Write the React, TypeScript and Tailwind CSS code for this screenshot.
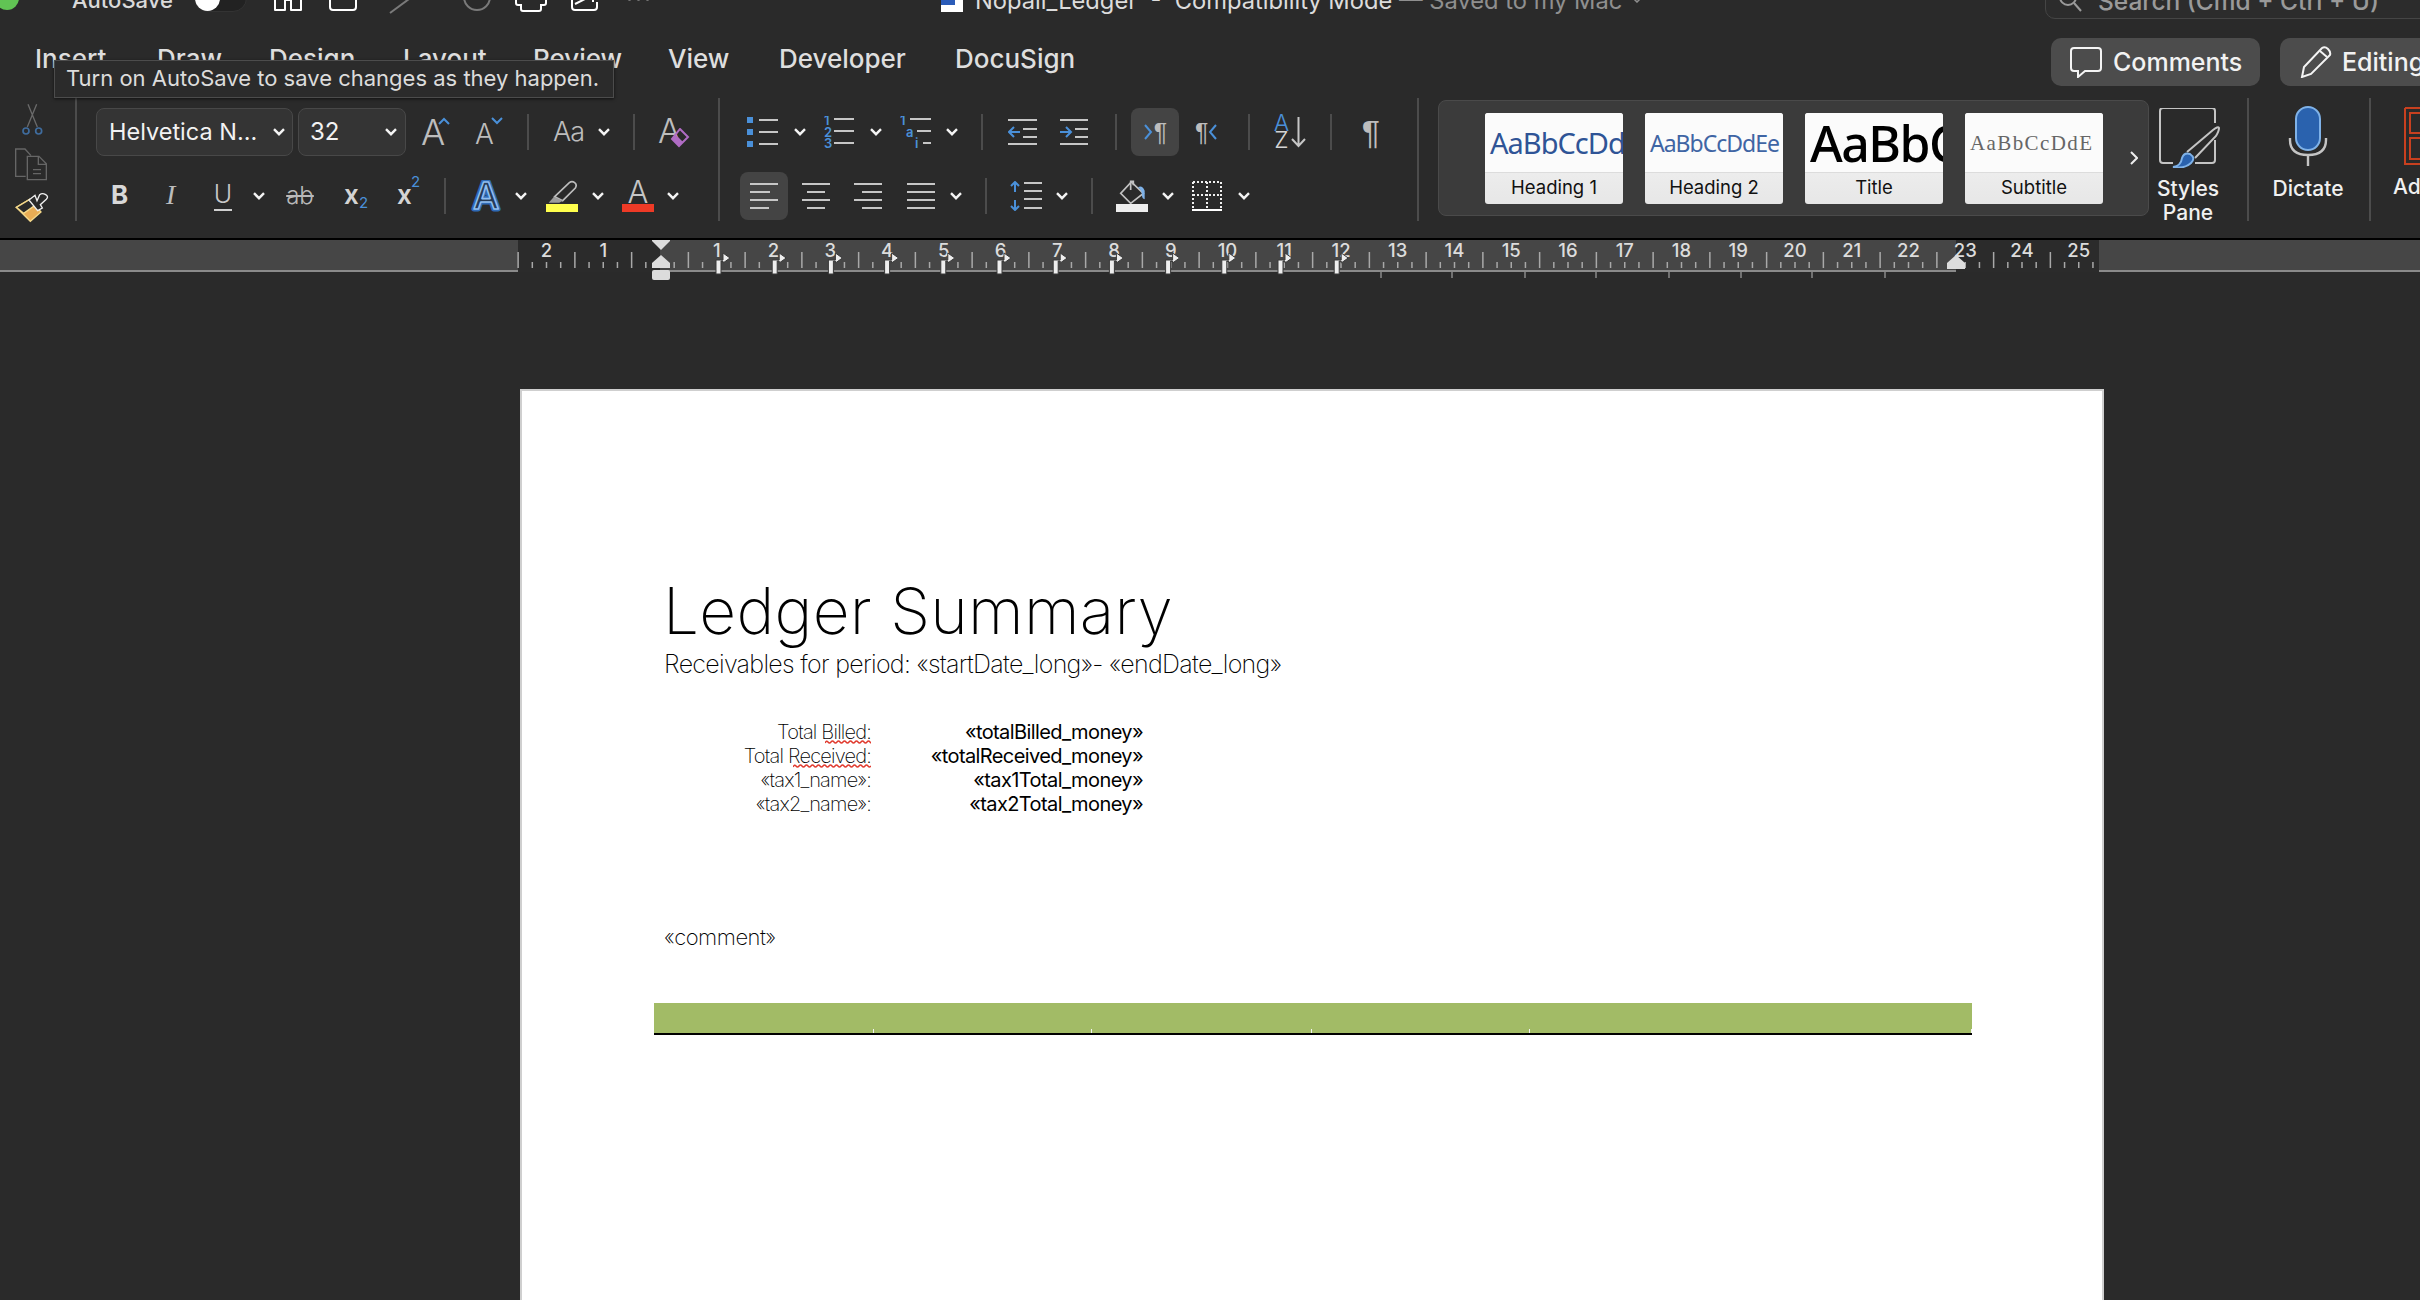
import React from 'react';

const Chev = ({ className = '' }: { className?: string }) => (
  <svg width="12" height="8" viewBox="0 0 12 8" className={'shrink-0 ' + className}>
    <path d="M1 1.2 6 6.2 11 1.2" fill="none" stroke="#f4f4f4" strokeWidth="2.4" />
  </svg>
);

const Sep = ({ className = '' }: { className?: string }) => (
  <div className={'w-[2px] h-[36px] shrink-0 bg-[#4c4c4c] ' + className} />
);

const GroupSep = () => <div className="w-[2px] h-[123px] shrink-0 bg-[#4c4c4c]" />;

function Lines({ w, rows }: { w: number; rows: [number, number][] }) {
  return (
    <svg width={w} height="28" viewBox={'0 0 ' + w + ' 28'} className="shrink-0">
      {rows.map(([a, b], i) => (
        <line key={i} x1={a} x2={b} y1={2 + i * 8} y2={2 + i * 8} stroke="#c6c6c6" strokeWidth="2" />
      ))}
    </svg>
  );
}

function TopBar() {
  return (
    <div className="h-[40px] -mt-[20px] flex items-center shrink-0">
      <div className="w-[24px] h-[24px] -ml-[5px] -mt-[4px] rounded-full bg-[#61c454] shrink-0" />
      <div className="ml-[53px] w-[122px] mt-[1px] text-[22px] text-[#d9d9d9] font-medium shrink-0">AutoSave</div>
      <div className="relative w-[53px] h-[28px] -mt-[4px] rounded-full bg-[#222] border border-[#333] shrink-0">
        <div className="absolute left-0 top-0 w-[25px] h-[26px] rounded-full bg-white" />
      </div>
      <svg width="28" height="24" viewBox="0 -12 28 24" className="ml-[27px] shrink-0">
        <path d="M1-12V10H11V0H17V10H27V-12" fill="none" stroke="#fff" strokeWidth="2" strokeLinejoin="round" />
      </svg>
      <svg width="28" height="24" viewBox="0 -12 28 24" className="ml-[27px] shrink-0">
        <path d="M1-12V7Q1 10 4 10H24Q27 10 27 7V-12M6-2H22" fill="none" stroke="#fff" strokeWidth="2" />
      </svg>
      <svg width="52" height="28" viewBox="0 -14 52 28" className="ml-[32px] shrink-0">
        <path d="M1 13 20-1" fill="none" stroke="#7a7a7a" strokeWidth="2" />
        <path d="M40-3 45 0 50-3Z" fill="#7a7a7a" />
      </svg>
      <svg width="28" height="24" viewBox="0 -12 28 24" className="ml-[22px] shrink-0">
        <circle cx="14" cy="-3" r="13" fill="none" stroke="#7a7a7a" strokeWidth="2" />
      </svg>
      <svg width="32" height="24" viewBox="0 -12 32 24" className="ml-[24px] shrink-0">
        <path d="M1-12V3Q1 5 3 5H6V9Q6 11 8 11H24Q26 11 26 9V5H29Q31 5 31 3V-12" fill="none" stroke="#fff" strokeWidth="2" />
      </svg>
      <svg width="27" height="24" viewBox="0 -12 27 24" className="ml-[24px] shrink-0">
        <path d="M1-6V7Q1 10 4 10H23Q26 10 26 7V2M4 4 16-2M10-6 22-6 22 2" fill="none" stroke="#fff" strokeWidth="2" />
      </svg>
      <div className="ml-[30px] flex gap-[6px] mt-[-1px] shrink-0">
        <div className="w-[3px] h-[3px] rounded-full bg-[#777]" />
        <div className="w-[3px] h-[3px] rounded-full bg-[#777]" />
        <div className="w-[3px] h-[3px] rounded-full bg-[#777]" />
      </div>
      <svg width="22" height="24" viewBox="0 -12 22 24" className="ml-[292px] shrink-0">
        <path d="M0-12H22V12H0Z" fill="#fff" />
        <rect x="0" y="-12" width="14" height="17" fill="#2b5cb8" />
      </svg>
      <div className="ml-[12px] w-[657px] mt-[2px] shrink-0 text-[23.7px] whitespace-nowrap text-[#dcdcdc]">
        Nopali_Ledger &nbsp;-&nbsp; Compatibility Mode <span className="text-[#8f8f8f]">— Saved to my Mac</span>
      </div>
      <svg width="10" height="6" viewBox="0 0 10 6" className="shrink-0">
        <path d="M1 1 5 5 9 1" fill="none" stroke="#8f8f8f" strokeWidth="1.5" />
      </svg>
      <div className="ml-[403px] flex-1 h-[38px] min-w-0 rounded-[10px] border border-[#454545] bg-[#2c2c2c] flex items-center pl-[12px] -mr-[20px]">
        <svg width="24" height="24" viewBox="0 0 24 24" className="shrink-0">
          <circle cx="10" cy="9" r="8" fill="none" stroke="#9a9a9a" strokeWidth="2" />
          <path d="M16 15 23 23" stroke="#9a9a9a" strokeWidth="2" />
        </svg>
        <span className="ml-[16px] mt-[3px] text-[24.5px] text-[#9a9a9a] font-medium whitespace-nowrap">Search (Cmd + Ctrl + U)</span>
      </div>
    </div>
  );
}

function Tabs() {
  const tab = 'shrink-0 text-[26px] leading-[30px] font-medium text-[#dedede] pt-[24px]';
  return (
    <div className="h-[78px] flex items-start pl-[35px] shrink-0 overflow-hidden">
      <div className={tab + ' w-[122px]'}>Insert</div>
      <div className={tab + ' w-[112px]'}>Draw</div>
      <div className={tab + ' w-[134px]'}>Design</div>
      <div className={tab + ' w-[130px]'}>Layout</div>
      <div className={tab + ' w-[135px]'}>Review</div>
      <div className={tab + ' w-[111px]'}>View</div>
      <div className={tab + ' w-[176px]'}>Developer</div>
      <div className={tab + ' w-[1096px]'}>DocuSign</div>
      <button className="mt-[18px] w-[209px] h-[48px] rounded-[10px] bg-[#4c4c4c] flex items-center pl-[18px] shrink-0">
        <svg width="34" height="32" viewBox="0 0 34 32" className="shrink-0">
          <path d="M5 2H29Q32 2 32 5V22Q32 25 29 25H16L9 31V25H5Q2 25 2 22V5Q2 2 5 2Z" fill="none" stroke="#f4f4f4" strokeWidth="2" />
        </svg>
        <span className="ml-[10px] mt-[1px] text-[25px] font-medium text-[#f2f2f2]">Comments</span>
      </button>
      <button className="ml-[20px] mt-[18px] w-[200px] h-[48px] rounded-[10px] bg-[#4c4c4c] flex items-center pl-[20px] shrink-0">
        <svg width="32" height="32" viewBox="0 0 32 32" className="shrink-0">
          <path d="M2 31 4 21 22 2Q25 0 28 3T30 9L11 28Z" fill="none" stroke="#f4f4f4" strokeWidth="2" />
          <path d="M20 5 27 11" stroke="#f4f4f4" strokeWidth="2" />
        </svg>
        <span className="ml-[10px] mt-[1px] text-[25px] font-medium text-[#f2f2f2]">Editing</span>
      </button>
    </div>
  );
}

function Clipboard() {
  return (
    <div className="w-[75px] flex flex-col pl-[13px] pt-[7px] shrink-0">
      <svg width="32" height="33" viewBox="0 0 96 99" className="ml-[3px] -mt-[2px] shrink-0">
        <path d="M36 4 64 72M62 4 34 72" fill="none" stroke="#6a6a6a" strokeWidth="4" />
        <circle cx="30" cy="84" r="9" fill="none" stroke="#3f6c9e" strokeWidth="5" />
        <circle cx="68" cy="84" r="9" fill="none" stroke="#3f6c9e" strokeWidth="5" />
      </svg>
      <svg width="34" height="33" viewBox="16 143 100 99" className="ml-[1px] mt-[12px] shrink-0">
        <path d="M50 228H20V146H48L66 166" fill="none" stroke="#666" strokeWidth="4" />
        <path d="M55 168H90L112 190V238H55ZM88 168V192H112M72 208H96M72 220H96" fill="none" stroke="#666" strokeWidth="4" />
      </svg>
      <svg width="34" height="31" viewBox="16 274 102 93" className="ml-[2px] mt-[11px] shrink-0">
        <path d="M20 320 60 296 94 334 62 362Z" fill="#e9ad55" stroke="#f5d98a" strokeWidth="4" />
        <path d="M20 320 60 296 76 314 42 338Z" fill="#2a2a2a" stroke="#f5d98a" strokeWidth="4" />
        <path d="M58 298 76 284 82 300 90 282Q98 276 108 282T110 296L92 312 98 322 84 330Z" fill="#2a2a2a" stroke="#f0f0f0" strokeWidth="4" />
      </svg>
    </div>
  );
}

function FontGroup() {
  const sup = 'absolute';
  return (
    <div className="w-[641px] flex flex-col gap-[16px] pt-[10px] shrink-0">
      <div className="h-[48px] flex items-center">
        <div className="ml-[19px] w-[197px] h-[48px] rounded-[8px] bg-[#343434] border border-[#484848] flex items-center pl-[12px] shrink-0">
          <span className="w-[164px] text-[23.5px] text-[#f2f2f2] whitespace-nowrap">Helvetica N...</span>
          <Chev />
        </div>
        <div className="ml-[5px] w-[108px] h-[48px] rounded-[8px] bg-[#343434] border border-[#484848] flex items-center pl-[11px] shrink-0">
          <span className="w-[75px] text-[24px] text-[#f2f2f2]">32</span>
          <Chev />
        </div>
        <div className="relative ml-[15px] w-[28px] h-[30px] shrink-0">
          <span className="text-[36px] leading-[30px] font-light text-[#bdbdbd]">A</span>
          <svg width="12" height="8" viewBox="0 0 12 8" className={sup + ' -right-[1px] top-0'}><path d="M1 7 6 2 11 7" fill="none" stroke="#4a90d9" strokeWidth="2" /></svg>
        </div>
        <div className="relative ml-[26px] w-[28px] h-[30px] shrink-0 flex items-end">
          <span className="text-[28px] leading-[26px] font-light text-[#bdbdbd]">A</span>
          <svg width="12" height="8" viewBox="0 0 12 8" className={sup + ' right-0 top-0'}><path d="M1 1 6 6 11 1" fill="none" stroke="#4a90d9" strokeWidth="2" /></svg>
        </div>
        <Sep className="ml-[24px]" />
        <span className="ml-[24px] w-[31px] text-[27px] font-light text-[#bdbdbd] shrink-0 whitespace-nowrap tracking-[-1px]">Aa</span>
        <Chev className="ml-[14px]" />
        <Sep className="ml-[23px]" />
        <div className="relative ml-[23px] w-[31px] h-[30px] shrink-0">
          <span className="text-[34px] leading-[28px] font-light text-[#bdbdbd]">A</span>
          <svg width="20" height="20" viewBox="0 0 20 20" className={sup + ' -right-[1px] -bottom-[1px]'}>
            <path d="M10 1 18 9 9 18 2 11Z" fill="none" stroke="#b06cc4" strokeWidth="2" />
            <path d="M6 7 13 14 9 18 2 11Z" fill="#b06cc4" />
          </svg>
        </div>
      </div>
      <div className="h-[48px] flex items-center">
        <span className="ml-[34px] w-[17px] -mt-[3px] text-[26px] font-bold text-[#d8d8d8] shrink-0">B</span>
        <span className="ml-[38px] w-[13px] -mt-[3px] text-[28px] italic text-[#bcbcbc] shrink-0 [font-family:'Liberation_Serif',serif]">I</span>
        <span className="ml-[35px] w-[18px] -mt-[1px] text-[25px] leading-[29px] border-b-2 border-[#d0d0d0] font-light text-[#c8c8c8] shrink-0 flex justify-center">U</span>
        <Chev className="ml-[21px]" />
        <span className="relative ml-[20px] w-[30px] text-[24px] text-[#b9b9b9] font-light shrink-0 text-center line-through">ab</span>
        <span className="relative ml-[29px] w-[23px] -mt-[3px] text-[26px] font-semibold text-[#d4d4d4] shrink-0">
          x<span className="absolute left-[15px] top-[17px] text-[15px] text-[#4a90d9] font-normal">2</span>
        </span>
        <span className="relative ml-[30px] w-[22px] -mt-[3px] text-[26px] font-semibold text-[#d4d4d4] shrink-0">
          x<span className="absolute left-[14px] -top-[4px] text-[15px] text-[#4a90d9] font-normal">2</span>
        </span>
        <Sep className="ml-[25px]" />
        <svg width="32" height="32" viewBox="0 0 32 32" className="ml-[24px] -mt-[1px] shrink-0">
          <text x="16" y="29" textAnchor="middle" fill="none" stroke="#2f6ab5" strokeWidth="5" strokeLinejoin="round" className="text-[37px] font-medium">A</text>
          <text x="16" y="29" textAnchor="middle" fill="#263a55" stroke="#8fbdf0" strokeWidth="1.6" strokeLinejoin="round" className="text-[37px] font-medium">A</text>
        </svg>
        <Chev className="ml-[13px]" />
        <div className="ml-[19px] w-[32px] flex flex-col shrink-0">
          <svg width="32" height="24" viewBox="0 0 96 72">
            <path d="M26 50 70 8Q78 2 86 8T88 24L50 62Z" fill="none" stroke="#bdbdbd" strokeWidth="5" />
            <path d="M8 68 24 50 50 62 40 68Z" fill="#9c9c9c" />
          </svg>
          <div className="h-[8px] bg-[#ffff4d]" />
        </div>
        <Chev className="ml-[14px]" />
        <div className="ml-[18px] w-[32px] flex flex-col items-center shrink-0">
          <span className="text-[31px] leading-[24px] font-light text-[#c6c6c6]">A</span>
          <div className="w-full h-[8px] bg-[#ee3a26]" />
        </div>
        <Chev className="ml-[13px]" />
      </div>
    </div>
  );
}

function ParagraphGroup() {
  const numCls = 'fill-[#4a90d9] text-[13px] font-semibold';
  const pil = "[font-family:'Liberation_Sans',sans-serif] text-[#bdbdbd]";
  return (
    <div className="w-[697px] flex flex-col gap-[16px] pt-[10px] shrink-0">
      <div className="h-[48px] flex items-center">
        <svg width="31" height="30" viewBox="0 0 31 30" className="ml-[27px] shrink-0">
          <path d="M0 0H6V6H0ZM0 12H6V18H0ZM0 24H6V30H0Z" fill="#4a90d9" />
          <path d="M12 3H31M12 15H31M12 27H31" stroke="#c6c6c6" strokeWidth="2" />
        </svg>
        <Chev className="ml-[16px]" />
        <svg width="30" height="32" viewBox="0 0 30 32" className="ml-[18px] shrink-0">
          <text x="0" y="9" className={numCls}>1</text>
          <text x="0" y="21" className={numCls}>2</text>
          <text x="0" y="32" className={numCls}>3</text>
          <path d="M10 3H30M10 15H30M10 27H30" stroke="#c6c6c6" strokeWidth="2" />
        </svg>
        <Chev className="ml-[16px]" />
        <svg width="31" height="32" viewBox="0 0 31 32" className="ml-[18px] shrink-0">
          <text x="0" y="9" className={numCls}>1</text>
          <text x="6" y="21" className={numCls}>a</text>
          <text x="15" y="32" className={numCls}>i</text>
          <path d="M10 3H31M17 15H31M23 27H31" stroke="#c6c6c6" strokeWidth="2" />
        </svg>
        <Chev className="ml-[15px]" />
        <Sep className="ml-[23px]" />
        <svg width="29" height="30" viewBox="0 0 29 30" className="ml-[25px] shrink-0">
          <path d="M0 3H29M15 12H29M15 20H29M0 27H29" stroke="#c6c6c6" strokeWidth="2" />
          <path d="M1 15H12M6 10 1 15 6 20" fill="none" stroke="#4a90d9" strokeWidth="2" />
        </svg>
        <svg width="28" height="30" viewBox="0 0 28 30" className="ml-[23px] shrink-0">
          <path d="M0 3H28M15 12H28M15 20H28M0 27H28" stroke="#c6c6c6" strokeWidth="2" />
          <path d="M0 15H11M6 10 11 15 6 20" fill="none" stroke="#4a90d9" strokeWidth="2" />
        </svg>
        <Sep className="ml-[27px]" />
        <div className="ml-[14px] w-[48px] h-[48px] rounded-[8px] bg-[#444] flex items-center justify-center shrink-0">
          <svg width="10" height="18" viewBox="0 0 10 18" className="shrink-0"><path d="M2 2 8 9 2 16" fill="none" stroke="#4a90d9" strokeWidth="2" /></svg>
          <span className={'ml-[1px] text-[25px] leading-[24px] ' + pil}>¶</span>
        </div>
        <div className="ml-[16px] w-[24px] flex items-center shrink-0">
          <span className={'text-[25px] leading-[24px] ' + pil}>¶</span>
          <svg width="10" height="18" viewBox="0 0 10 18" className="shrink-0"><path d="M8 2 2 9 8 16" fill="none" stroke="#4a90d9" strokeWidth="2" /></svg>
        </div>
        <Sep className="ml-[29px]" />
        <div className="ml-[22px] w-[34px] flex items-center shrink-0">
          <div className="w-[19px] flex flex-col items-center text-[23px] leading-[17px] font-light">
            <span className="text-[#4a90d9]">A</span>
            <span className="text-[#d4d4d4]">Z</span>
          </div>
          <svg width="15" height="32" viewBox="0 0 15 32" className="shrink-0"><path d="M7.5 1V30M1 23 7.5 30 14 23" fill="none" stroke="#c6c6c6" strokeWidth="2" /></svg>
        </div>
        <Sep className="ml-[24px]" />
        <span className={'ml-[27px] w-[24px] text-[34px] leading-[32px] shrink-0 text-center ' + pil}>¶</span>
      </div>
      <div className="h-[48px] flex items-center">
        <div className="ml-[20px] w-[48px] h-[48px] rounded-[8px] bg-[#444] flex items-center justify-center shrink-0">
          <Lines w={28} rows={[[0, 28], [0, 20], [0, 28], [0, 19]]} />
        </div>
        <div className="ml-[14px] shrink-0"><Lines w={28} rows={[[0, 28], [5, 23], [0, 28], [5, 23]]} /></div>
        <div className="ml-[24px] shrink-0"><Lines w={28} rows={[[0, 28], [8, 28], [0, 28], [8, 28]]} /></div>
        <div className="ml-[25px] shrink-0"><Lines w={28} rows={[[0, 28], [0, 28], [0, 28], [0, 28]]} /></div>
        <Chev className="ml-[15px]" />
        <Sep className="ml-[23px]" />
        <svg width="32" height="30" viewBox="0 0 32 30" className="ml-[23px] shrink-0">
          <path d="M14 2H32M14 10H32M14 18H32M14 27H32" stroke="#c6c6c6" strokeWidth="2" />
          <path d="M5 1V11M1 5 5 1 9 5M5 19V29M1 25 5 29 9 25" fill="none" stroke="#4a90d9" strokeWidth="2" />
        </svg>
        <Chev className="ml-[14px]" />
        <Sep className="ml-[23px]" />
        <div className="ml-[23px] w-[32px] flex flex-col shrink-0">
          <svg width="32" height="24" viewBox="0 0 96 72">
            <path d="M14 40 46 6 82 40 44 70Z" fill="none" stroke="#c2c2c2" strokeWidth="5" />
            <path d="M44 30V4H52V16" fill="none" stroke="#c2c2c2" strokeWidth="5" />
            <path d="M66 22Q78 14 86 32V58Q78 56 78 46 78 32 66 22Z" fill="#7fb2e8" />
          </svg>
          <div className="h-[8px] bg-[#eeeeee]" />
        </div>
        <Chev className="ml-[14px]" />
        <svg width="30" height="30" viewBox="0 0 30 30" className="ml-[18px] shrink-0">
          <path d="M1 1H29V27M1 1V27M15 1V27M1 14H29" fill="none" stroke="#f0f0f0" strokeWidth="2" strokeDasharray="2 2" />
          <path d="M0 29H30" stroke="#fff" strokeWidth="2" />
        </svg>
        <Chev className="ml-[16px]" />
      </div>
    </div>
  );
}

function StyleCard({ label, children }: { label: string; children: React.ReactNode }) {
  return (
    <div className="w-[138px] h-[91px] rounded-[3px] overflow-hidden bg-gradient-to-b from-[#f7f7f7] to-[#e7e7e7] flex flex-col shrink-0">
      <div className="h-[60px] bg-[#fbfbfb] border-b border-[#dcdcdc] overflow-hidden px-[5px] flex items-center shrink-0">
        {children}
      </div>
      <div className="flex-1 flex items-center justify-center pb-[2px] text-[18.5px] text-[#111]">{label}</div>
    </div>
  );
}

function StylesGallery() {
  return (
    <div className="ml-[19px] mt-[2px] w-[711px] h-[116px] rounded-[8px] bg-[#3b3b3b] border border-[#4a4a4a] flex items-start pl-[46px] pt-[12px] shrink-0">
      <div className="flex gap-[22px] shrink-0">
        <StyleCard label="Heading 1">
          <span className="text-[29px] leading-[36px] text-[#2f5496] whitespace-nowrap tracking-[-1px] [font-family:'Noto_Sans',sans-serif]">AaBbCcDdEe</span>
        </StyleCard>
        <StyleCard label="Heading 2">
          <span className="text-[23px] leading-[30px] text-[#3f65a4] whitespace-nowrap tracking-[-1px] [font-family:'Noto_Sans',sans-serif]">AaBbCcDdEe</span>
        </StyleCard>
        <StyleCard label="Title">
          <span className="text-[50px] leading-[54px] font-medium text-black whitespace-nowrap tracking-[-1.5px] [font-family:'Noto_Sans',sans-serif]">AaBbCc</span>
        </StyleCard>
        <StyleCard label="Subtitle">
          <span className="text-[21px] leading-[28px] text-[#666] whitespace-nowrap tracking-[1.4px] [font-family:'Liberation_Serif',serif]">AaBbCcDdE</span>
        </StyleCard>
      </div>
      <svg width="8" height="14" viewBox="0 0 8 14" className="ml-[27px] mt-[38px] shrink-0">
        <path d="M1 1 7 7 1 13" fill="none" stroke="#eee" strokeWidth="2" />
      </svg>
    </div>
  );
}

function RightTools() {
  const label = 'text-[21px] leading-[24px] text-[#f0f0f0] text-center font-medium';
  return (
    <>
      <div className="w-[76px] pt-[10px] flex flex-col items-center shrink-0">
        <svg width="62" height="60" viewBox="0 0 62 60" className="ml-[6px] shrink-0">
          <path d="M14 55H4Q1 55 1 52V3Q1 0 4 0H53Q56 0 56 3V15M56 32V52Q56 55 53 55H36" fill="none" stroke="#c4c4c4" strokeWidth="2" />
          <path d="M28 44 54 22Q59 18 60 20 60 23 57 28L36 50" fill="none" stroke="#c4c4c4" strokeWidth="2" />
          <path d="M14 59Q22 58 23 50 25 44 31 46 37 50 32 55 26 61 14 59Z" fill="#2a62ae" stroke="#7fb2e8" strokeWidth="2" />
        </svg>
        <div className={'mt-[9px] ml-[2px] ' + label}>Styles<br />Pane</div>
      </div>
      <div className="ml-[22px] shrink-0"><GroupSep /></div>
      <div className="w-[118px] pt-[8px] flex flex-col items-center shrink-0">
        <svg width="40" height="60" viewBox="0 0 40 60" className="shrink-0">
          <rect x="8" y="1" width="24" height="43" rx="12" fill="#2a62ae" stroke="#7fb2e8" strokeWidth="2" />
          <path d="M2 32V34Q2 49 20 49T38 34V32M20 49V60" fill="none" stroke="#c4c4c4" strokeWidth="2.4" />
        </svg>
        <div className={'mt-[11px] ' + label}>Dictate</div>
      </div>
      <div className="ml-[2px] shrink-0"><GroupSep /></div>
      <div className="pl-[22px] pt-[9px] flex flex-col shrink-0">
        <svg width="60" height="58" viewBox="0 0 60 58" className="ml-[11px] shrink-0">
          <path d="M1 1H60M1 1V57H60M6 6H60V26H6ZM6 31H60V52H6Z" fill="none" stroke="#c8401f" strokeWidth="2" />
        </svg>
        <div className={'mt-[10px] ' + label + ' text-left whitespace-nowrap'}>Add-ins</div>
      </div>
    </>
  );
}

function Ruler() {
  const zero = 660;
  const cm = 56.75;
  const ticks: { x: number; tall: boolean }[] = [];
  for (let k = -10; k <= 101; k++) {
    ticks.push({ x: zero + k * (cm / 4), tall: ((k % 4) + 4) % 4 === 2 });
  }
  const nums = [-2, -1, 1, 2, 3, 4, 5, 6, 7, 8, 9, 10, 11, 12, 13, 14, 15, 16, 17, 18, 19, 20, 21, 22, 23, 24, 25];
  const tabs = [0, 1, 2, 3, 4, 5, 6, 7, 8, 9, 10, 11].map((i) => 719 + i * 56.2);
  const under = [1381, 1452, 1525, 1596, 1669, 1741, 1812, 1885];
  return (
    <div className="relative h-[32px] shrink-0 flex">
      <div className="w-[518px] h-full bg-[#464646] border-b-2 border-[#8a8a8a]" />
      <div className="w-[142px] h-full bg-[#2b2b2b]" />
      <div className="w-[1296px] h-full bg-[#464646] border-b-2 border-[#8a8a8a]" />
      <div className="w-[143px] h-full bg-[#2b2b2b]" />
      <div className="flex-1 h-full bg-[#464646] border-b-2 border-[#8a8a8a]" />
      <svg width="2420" height="44" viewBox="0 240 2420 44" className="absolute left-0 top-0">
        {ticks.map((t, i) => (
          <line key={i} x1={t.x} x2={t.x} y1={t.tall ? 252 : 262} y2={268} stroke="#a8a8a8" strokeWidth="1.5" />
        ))}
        {nums.map((n) => (
          <text key={n} x={zero + n * cm} y={257} textAnchor="middle" className="fill-[#dcdcdc] text-[18.5px] font-medium">
            {Math.abs(n)}
          </text>
        ))}
        {under.map((x) => (
          <line key={x} x1={x} x2={x} y1={272} y2={278} stroke="#8a8a8a" strokeWidth="1.5" />
        ))}
        {tabs.map((x) => (
          <path key={x} d={'M' + (x - 3) + ' 274V260H' + (x + 4) + 'V253L' + (x + 11) + ' 258 ' + (x + 4) + ' 263V261H' + (x + 2) + 'V274Z'} fill="#eee" stroke="#3a3a3a" strokeWidth="1" />
        ))}
        <path d="M652 240H670V241L661 250 652 241Z" fill="#dcdcdc" />
        <path d="M661 255 670 263V268H652V263Z" fill="#dcdcdc" />
        <rect x="652" y="270" width="18" height="10" rx="2" fill="#dcdcdc" />
        <path d="M1956 255 1965 263V269H1947V263Z" fill="#dcdcdc" />
      </svg>
    </div>
  );
}

function Squiggle({ w }: { w: number }) {
  let d = 'M0 3';
  for (let x = 0; x < w; x += 6) d += 'Q' + (x + 1.5) + ' 0 ' + (x + 3) + ' 2T' + (x + 6) + ' 2';
  return (
    <svg width={w} height="5" viewBox={'0 0 ' + w + ' 5'} className="absolute right-0 -bottom-[1px]">
      <path d={d} fill="none" stroke="#e03a2e" strokeWidth="1.4" />
    </svg>
  );
}

function Page() {
  const label = 'relative text-right text-[20px] leading-[24px] [font-weight:250] text-black tracking-[-0.8px] whitespace-nowrap';
  const value = 'text-right text-[20px] leading-[24px] text-black tracking-[-0.6px] whitespace-nowrap';
  const cell = 'flex items-end justify-end shrink-0';
  const tick = <div className="w-[1.5px] h-[4px] bg-[#f4f4f4]" />;
  return (
    <div className="ml-[520px] mt-[117px] w-[1584px] h-[1000px] bg-white border-t-2 border-l-2 border-r-2 border-[#cfcfcf] flex flex-col shrink-0">
      <div className="ml-[141px] mt-[181px] text-[64px] leading-[78px] [font-weight:250] tracking-[0.25px] text-black">Ledger Summary</div>
      <div className="ml-[142px] -mt-[1px] text-[25px] leading-[30px] [font-weight:250] tracking-[-0.7px] text-black whitespace-nowrap">
        Receivables for period: «startDate_long»- «endDate_long»
      </div>
      <div className="ml-[142px] mt-[41px] grid grid-cols-[207px_272px]">
        <div className={label}>Total <span className="relative">Billed:<Squiggle w={46} /></span></div>
        <div className={value}>«totalBilled_money»</div>
        <div className={label}>Total <span className="relative">Received:<Squiggle w={78} /></span></div>
        <div className={value}>«totalReceived_money»</div>
        <div className={label}>«tax1_name»:</div>
        <div className={value}>«tax1Total_money»</div>
        <div className={label}>«tax2_name»:</div>
        <div className={value}>«tax2Total_money»</div>
      </div>
      <div className="ml-[142px] mt-[108px] text-[22px] leading-[26px] [font-weight:250] tracking-[-0.5px] text-black">«comment»</div>
      <div className="ml-[132px] mt-[53px] w-[1318px] h-[32px] bg-[#a2bb66] border-b-2 border-black flex">
        <div className={cell + ' w-[220px]'}>{tick}</div>
        <div className={cell + ' w-[218px]'}>{tick}</div>
        <div className={cell + ' w-[220px]'}>{tick}</div>
        <div className={cell + ' w-[218px]'}>{tick}</div>
        <div className={cell + ' w-[442px]'}>{tick}</div>
      </div>
    </div>
  );
}

export default function App() {
  return (
    <div className="relative w-[2420px] h-[1300px] overflow-hidden bg-[#2a2a2a] flex flex-col [font-family:Inter,'Liberation_Sans',sans-serif]">
      <TopBar />
      <Tabs />
      <div className="h-[140px] flex items-start shrink-0 overflow-hidden">
        <Clipboard />
        <GroupSep />
        <FontGroup />
        <GroupSep />
        <ParagraphGroup />
        <GroupSep />
        <StylesGallery />
        <RightTools />
      </div>
      <div className="h-[2px] bg-black shrink-0" />
      <Ruler />
      <Page />
      <div className="absolute left-[54px] top-[60px] w-[560px] h-[38px] bg-[#2b2b2b] border border-[#4c4c4c] shadow-[0_1px_3px_rgba(0,0,0,0.6)] flex items-center pl-[11px] pb-[2px] text-[22px] text-[#dcdcdc] whitespace-nowrap">
        Turn on AutoSave to save changes as they happen.
      </div>
    </div>
  );
}
